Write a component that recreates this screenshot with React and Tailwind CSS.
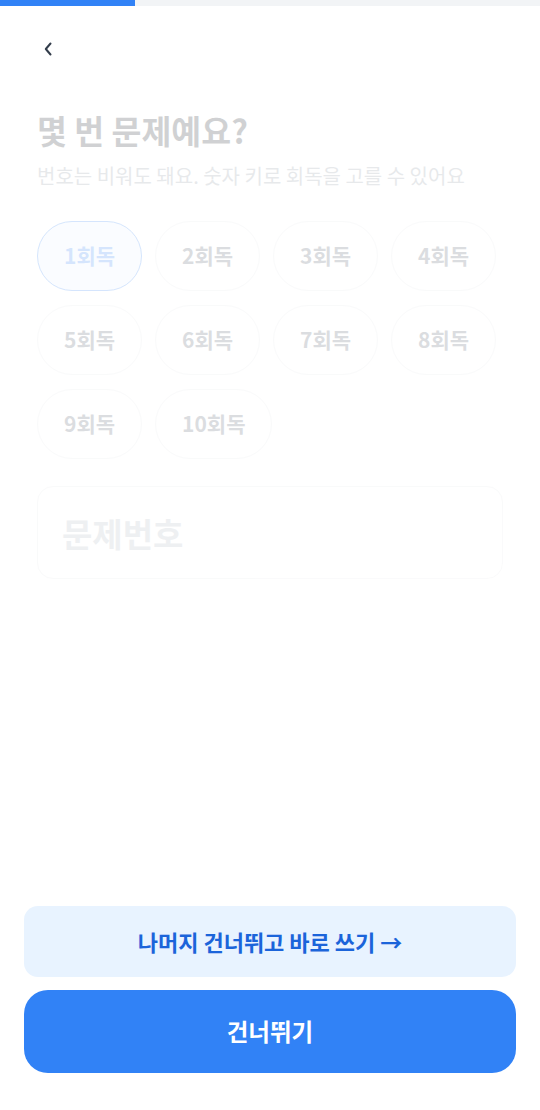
import React, { useState } from 'react';

const rounds = Array.from({ length: 10 }, (_, i) => i + 1);

export default function App() {
  const [picked, setPicked] = useState(1);
  const [num, setNum] = useState('');

  return (
    <div
      className="min-h-[1110px] bg-white flex flex-col"
      style={{ fontFamily: '"Noto Sans CJK KR", "Noto Sans", sans-serif' }}
    >
      {/* progress */}
      <div className="h-[6px] bg-[#f2f4f6]">
        <div className="h-full w-[135px] bg-[#3182f6]" />
      </div>

      <div className="h-[86px] flex items-center px-[43px]">
        <button className="w-[10px] h-[16px] flex items-center justify-center">
          <svg width="8" height="14" viewBox="0 0 8 14" fill="none">
            <path d="M6.5 1.5L1.8 7l4.7 5.5" stroke="#333d4b" strokeWidth="2" strokeLinecap="round" strokeLinejoin="round" />
          </svg>
        </button>
      </div>

      <div className="px-[37px] opacity-20">
        <h1 className="mt-[18px] text-[32.5px] leading-[40px] font-bold text-[#191f28]">몇 번 문제예요?</h1>
        <p className="mt-[13px] text-[20px] leading-[26px] text-[#8b95a1]">
          번호는 비워도 돼요. 숫자 키로 회독을 고를 수 있어요
        </p>

        <div className="mt-[32px] flex flex-wrap gap-x-[13px] gap-y-[14px]">
          {rounds.map((r) => (
            <button
              key={r}
              onClick={() => setPicked(r)}
              className={`h-[70px] px-[26px] rounded-full border text-[21px] font-semibold ${
                picked === r
                  ? 'bg-[#e8f3ff] border-[#3182f6] text-[#3182f6]'
                  : 'bg-white border-[#e5e8eb] text-[#4e5968]'
              }`}
            >
              {r}회독
            </button>
          ))}
        </div>

        <input
          value={num}
          onChange={(e) => setNum(e.target.value)}
          placeholder="문제번호"
          className="mt-[27px] w-full h-[93px] rounded-2xl border border-[#e5e8eb] px-[24px] text-[33px] font-bold text-[#191f28] placeholder:text-[#b0b8c1] outline-none"
        />
      </div>

      <div className="mt-auto px-[24px] pb-[37px] flex flex-col gap-[13px]">
        <button className="h-[71px] rounded-[14px] bg-[#e8f3ff] text-[#1b64da] text-[22px] font-semibold">
          나머지 건너뛰고 바로 쓰기 →
        </button>
        <button className="h-[83px] rounded-[24px] bg-[#3182f6] text-white text-[23.5px] font-bold">
          건너뛰기
        </button>
      </div>
    </div>
  );
}
